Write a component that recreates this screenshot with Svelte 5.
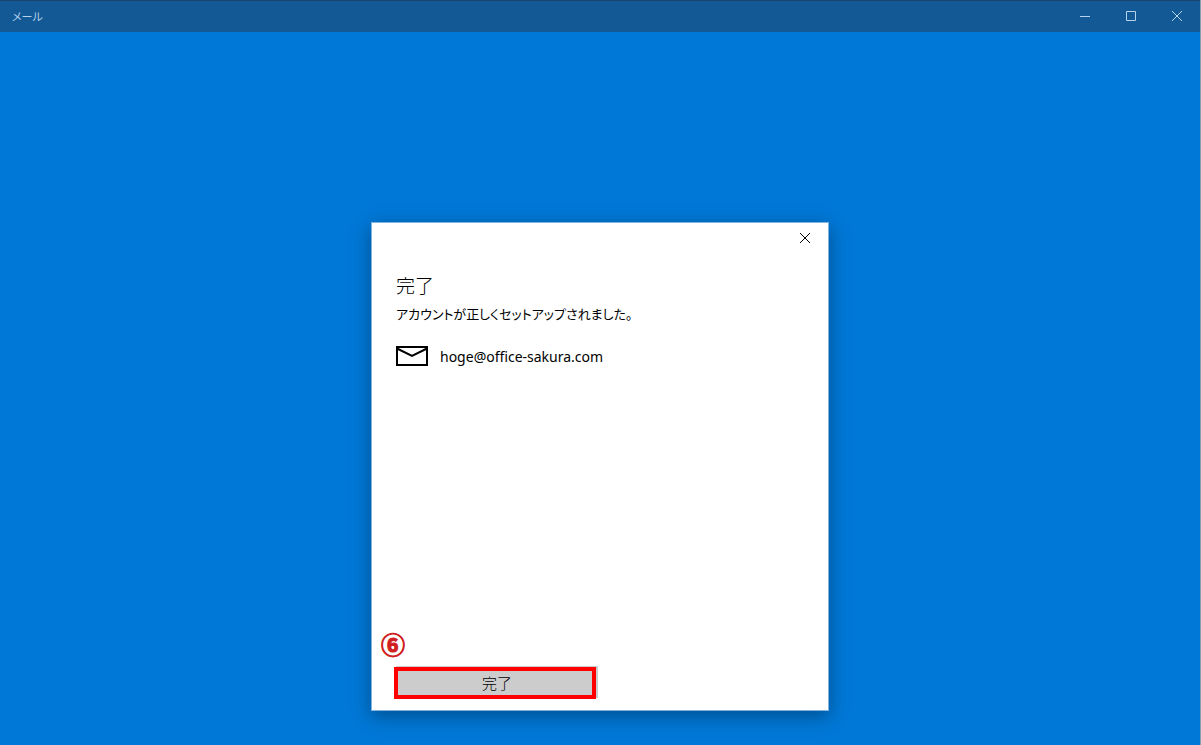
<script>
    let account = "hoge@office-sakura.com"
    let step = "⑥"
    let open = true

    function close() {
        open = false
    }
</script>

<div class="window">
    <header class="titlebar">
        <h1 class="app-name">メール</h1>
        <div class="controls">
            <button class="control" aria-label="最小化">
                <svg width="10" height="10" viewBox="0 0 10 10">
                    <path d="M0 5.5H10" />
                </svg>
            </button>
            <button class="control" aria-label="最大化">
                <svg width="10" height="10" viewBox="0 0 10 10">
                    <path d="M0.5 0.5H9.5V9.5H0.5Z" />
                </svg>
            </button>
            <button class="control" aria-label="閉じる">
                <svg width="10" height="10" viewBox="0 0 10 10">
                    <path d="M0 0L10 10M10 0L0 10" />
                </svg>
            </button>
        </div>
    </header>

    <main class="content">
        {#if open}
            <div class="dialog" role="dialog" aria-labelledby="dialog-title">
                <button class="dialog-close" aria-label="閉じる" on:click={close}>
                    <svg width="10" height="10" viewBox="0 0 10 10">
                        <path d="M0 0L10 10M10 0L0 10" />
                    </svg>
                </button>
                <div class="dialog-body">
                    <h2 class="title" id="dialog-title">完了</h2>
                    <p class="message">アカウントが正しくセットアップされました。</p>
                    <div class="account">
                        <svg class="mail" width="32" height="20" viewBox="0 0 32 20">
                            <path d="M1 1H31V19H1Z" />
                            <path d="M1 2.5L16 10L31 2.5" />
                        </svg>
                        <span class="address">{account}</span>
                    </div>
                </div>
                <div class="dialog-footer">
                    <button class="done" on:click={close}>完了</button>
                    <div class="marker"></div>
                    <span class="step">{step}</span>
                </div>
            </div>
        {/if}
    </main>
</div>

<style>
    :global(body){
        background-color: #0078d7;
    }
    .window{
        box-sizing: border-box;
        display: flex;
        flex-direction: column;
        min-height: 100vh;
        border-right: 1px solid #8a9fb4;
        background-color: #0078d7;
        font-family: "Noto Sans", "Noto Sans CJK JP", sans-serif;
    }
    button{
        padding: 0;
        border: none;
        background: none;
        font-family: inherit;
    }
    svg{
        display: block;
        fill: none;
        stroke: currentColor;
    }
    .titlebar{
        box-sizing: border-box;
        display: flex;
        justify-content: space-between;
        height: 32px;
        padding-bottom: 1px;
        border-top: 1px solid #1b4468;
        background-color: #135995;
        color: #b5d3ec;
    }
    .app-name{
        margin: 0;
        padding-left: 12px;
        font-family: "Noto Sans CJK JP", sans-serif;
        font-size: 11px;
        font-weight: 400;
        line-height: 30px;
        font-feature-settings: "palt";
    }
    .controls{
        display: flex;
    }
    .control{
        display: flex;
        align-items: center;
        justify-content: center;
        width: 46px;
        color: inherit;
    }
    .content{
        display: flex;
        flex: 1;
        align-items: flex-end;
        justify-content: center;
        padding: 34px 0;
    }
    .dialog{
        box-sizing: border-box;
        display: flex;
        flex-direction: column;
        width: 458px;
        min-height: 489px;
        border: 1px solid #7fb4e0;
        background-color: white;
        color: black;
        box-shadow: 0 5px 18px rgba(0, 0, 0, 0.35);
    }
    .dialog-close{
        display: flex;
        align-items: center;
        justify-content: center;
        align-self: flex-end;
        width: 46px;
        height: 30px;
        color: black;
    }
    .dialog-body{
        flex: 1;
        padding: 16px 24px;
    }
    .title{
        margin: 0;
        font-family: "Noto Sans CJK JP", sans-serif;
        font-size: 19px;
        font-weight: 300;
        line-height: 32px;
    }
    .message{
        margin: 0;
        font-family: "Noto Sans CJK JP", sans-serif;
        font-size: 13px;
        line-height: 26px;
        font-feature-settings: "palt";
    }
    .account{
        display: flex;
        align-items: flex-start;
        gap: 12px;
        margin-top: 19px;
    }
    .mail{
        stroke-width: 2;
    }
    .address{
        font-size: 14px;
        line-height: 22px;
    }
    .dialog-footer{
        position: relative;
        padding: 0 24px 12px;
    }
    .done{
        display: block;
        width: 202px;
        height: 32px;
        background-color: #cccccc;
        color: black;
        font-family: "Noto Sans CJK JP", sans-serif;
        font-size: 15px;
        font-weight: 300;
    }
    .marker{
        position: absolute;
        top: 1px;
        left: 22px;
        box-sizing: border-box;
        width: 202px;
        height: 32px;
        border: 4px solid #ff0000;
        pointer-events: none;
    }
    .step{
        position: absolute;
        top: -38px;
        left: 9px;
        color: #d02020;
        font-family: "Noto Sans CJK JP", sans-serif;
        font-size: 24px;
        font-weight: 700;
        line-height: 32px;
        -webkit-text-stroke: 1px #d02020;
    }
</style>
